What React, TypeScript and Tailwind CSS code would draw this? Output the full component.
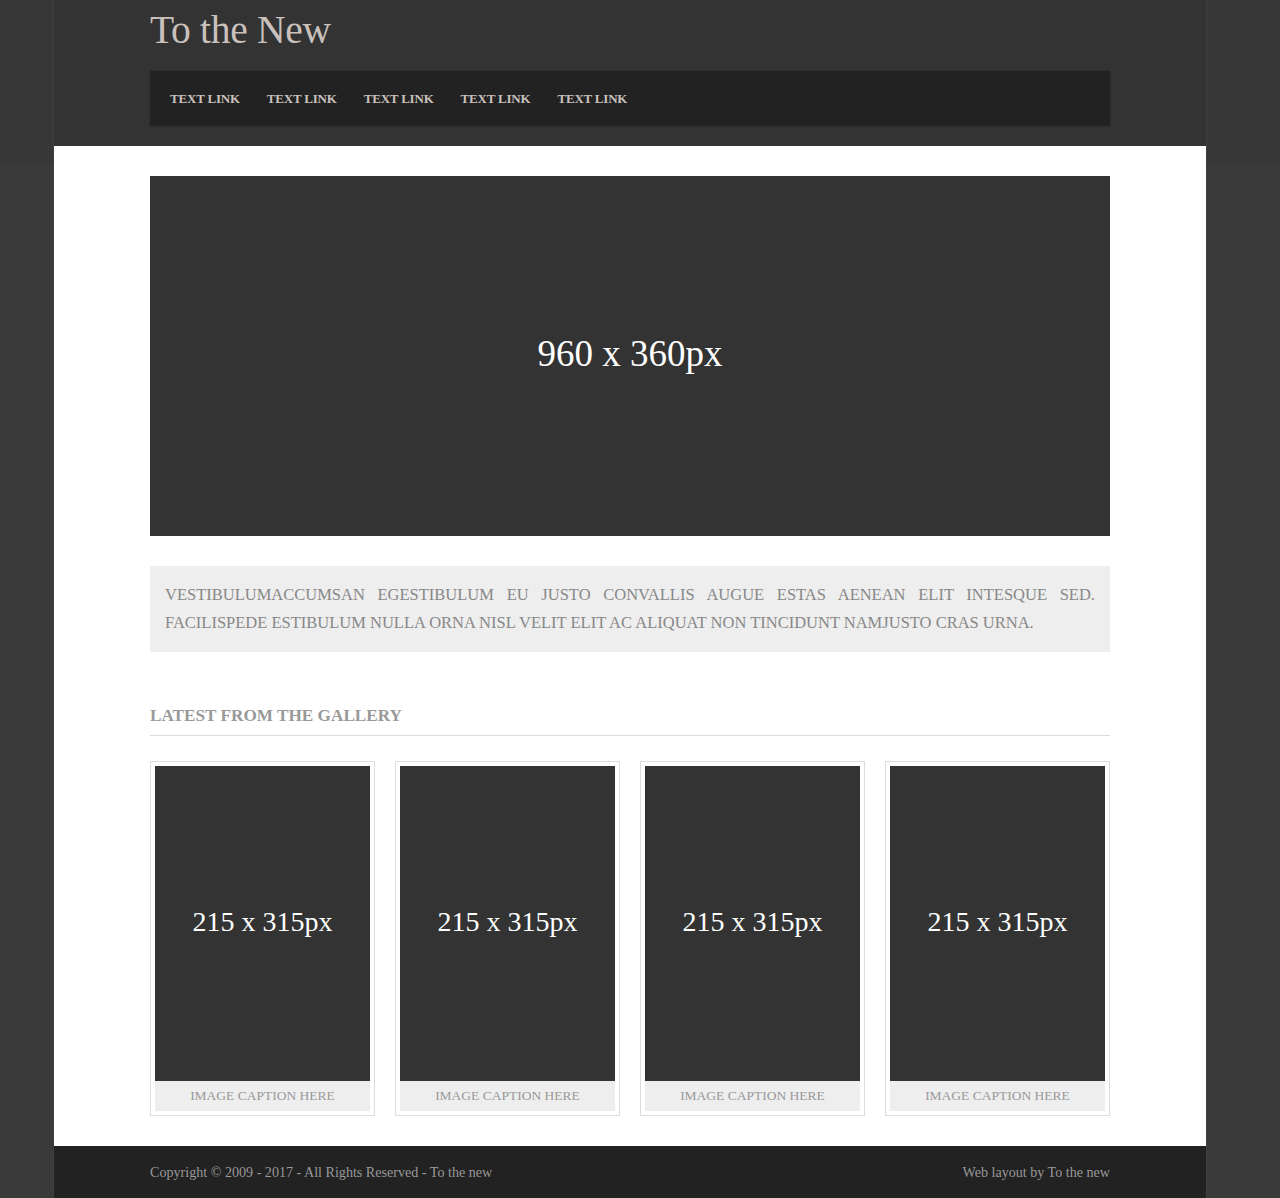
const serif = { fontFamily: '"Liberation Serif", Georgia, serif' };

const links = ["TEXT LINK", "TEXT LINK", "TEXT LINK", "TEXT LINK", "TEXT LINK"];

const GalleryCard = () => (
  <div className="border border-[#dddddd] p-[4px]">
    <div className="h-[315px] bg-[#333333] flex items-center justify-center text-white text-[28px] pb-[4px]">
      215 x 315px
    </div>
    <div className="h-[30px] bg-[#eeeeee] flex items-center justify-center text-[13.5px] text-[#999999]">
      IMAGE CAPTION HERE
    </div>
  </div>
);

export default function App() {
  return (
    <div
      className="min-h-[1198px] bg-[#3a3a3a] bg-[linear-gradient(to_bottom,#373737_0,#373737_164px,#3a3a3a_164px)]"
      style={serif}
    >
      <div className="w-[1152px] ml-[54px] shadow-[0_0_0_1px_#404040]">
        <header className="bg-[#333333] h-[146px] px-[96px] pt-[7px]">
          <h1 className="text-[39.5px] leading-[47px] text-[#cac1bc] tracking-[-0.3px]">
            To the New
          </h1>
          <nav className="mt-[17px] h-[55px] bg-[#222222] flex items-center pl-[20px] gap-[27px] shadow-[0_0_2px_rgba(0,0,0,0.3)]">
            {links.map((l, i) => (
              <a key={i} className="text-[13px] font-bold text-[#cac1bc] tracking-[-0.2px]">
                {l}
              </a>
            ))}
          </nav>
        </header>

        <main className="bg-white px-[96px] pt-[30px] pb-[30px]">
          <div className="h-[360px] bg-[#333333] flex items-center justify-center text-white text-[37px] pb-[4px]">
            960 x 360px
          </div>

          <div className="mt-[30px] bg-[#eeeeee] px-[15px] py-[15px] text-[#888888] text-[16.5px] leading-[28px] text-justify">
            VESTIBULUMACCUMSAN EGESTIBULUM EU JUSTO CONVALLIS AUGUE ESTAS AENEAN ELIT INTESQUE SED.
            FACILISPEDE ESTIBULUM NULLA ORNA NISL VELIT ELIT AC ALIQUAT NON TINCIDUNT NAMJUSTO CRAS URNA.
          </div>

          <h2 className="mt-[52px] text-[17.2px] leading-[24px] font-bold text-[#999999] pb-[7px] border-b border-[#dddddd]">
            LATEST FROM THE GALLERY
          </h2>

          <div className="mt-[25px] grid grid-cols-4 gap-[20px]">
            <GalleryCard />
            <GalleryCard />
            <GalleryCard />
            <GalleryCard />
          </div>
        </main>

        <footer className="bg-[#222222] h-[52px] px-[96px] pt-[2px] flex items-center justify-between text-[14.1px] text-[#999999]">
          <span>Copyright © 2009 - 2017 - All Rights Reserved - To the new</span>
          <span>Web layout by To the new</span>
        </footer>
      </div>
    </div>
  );
}
